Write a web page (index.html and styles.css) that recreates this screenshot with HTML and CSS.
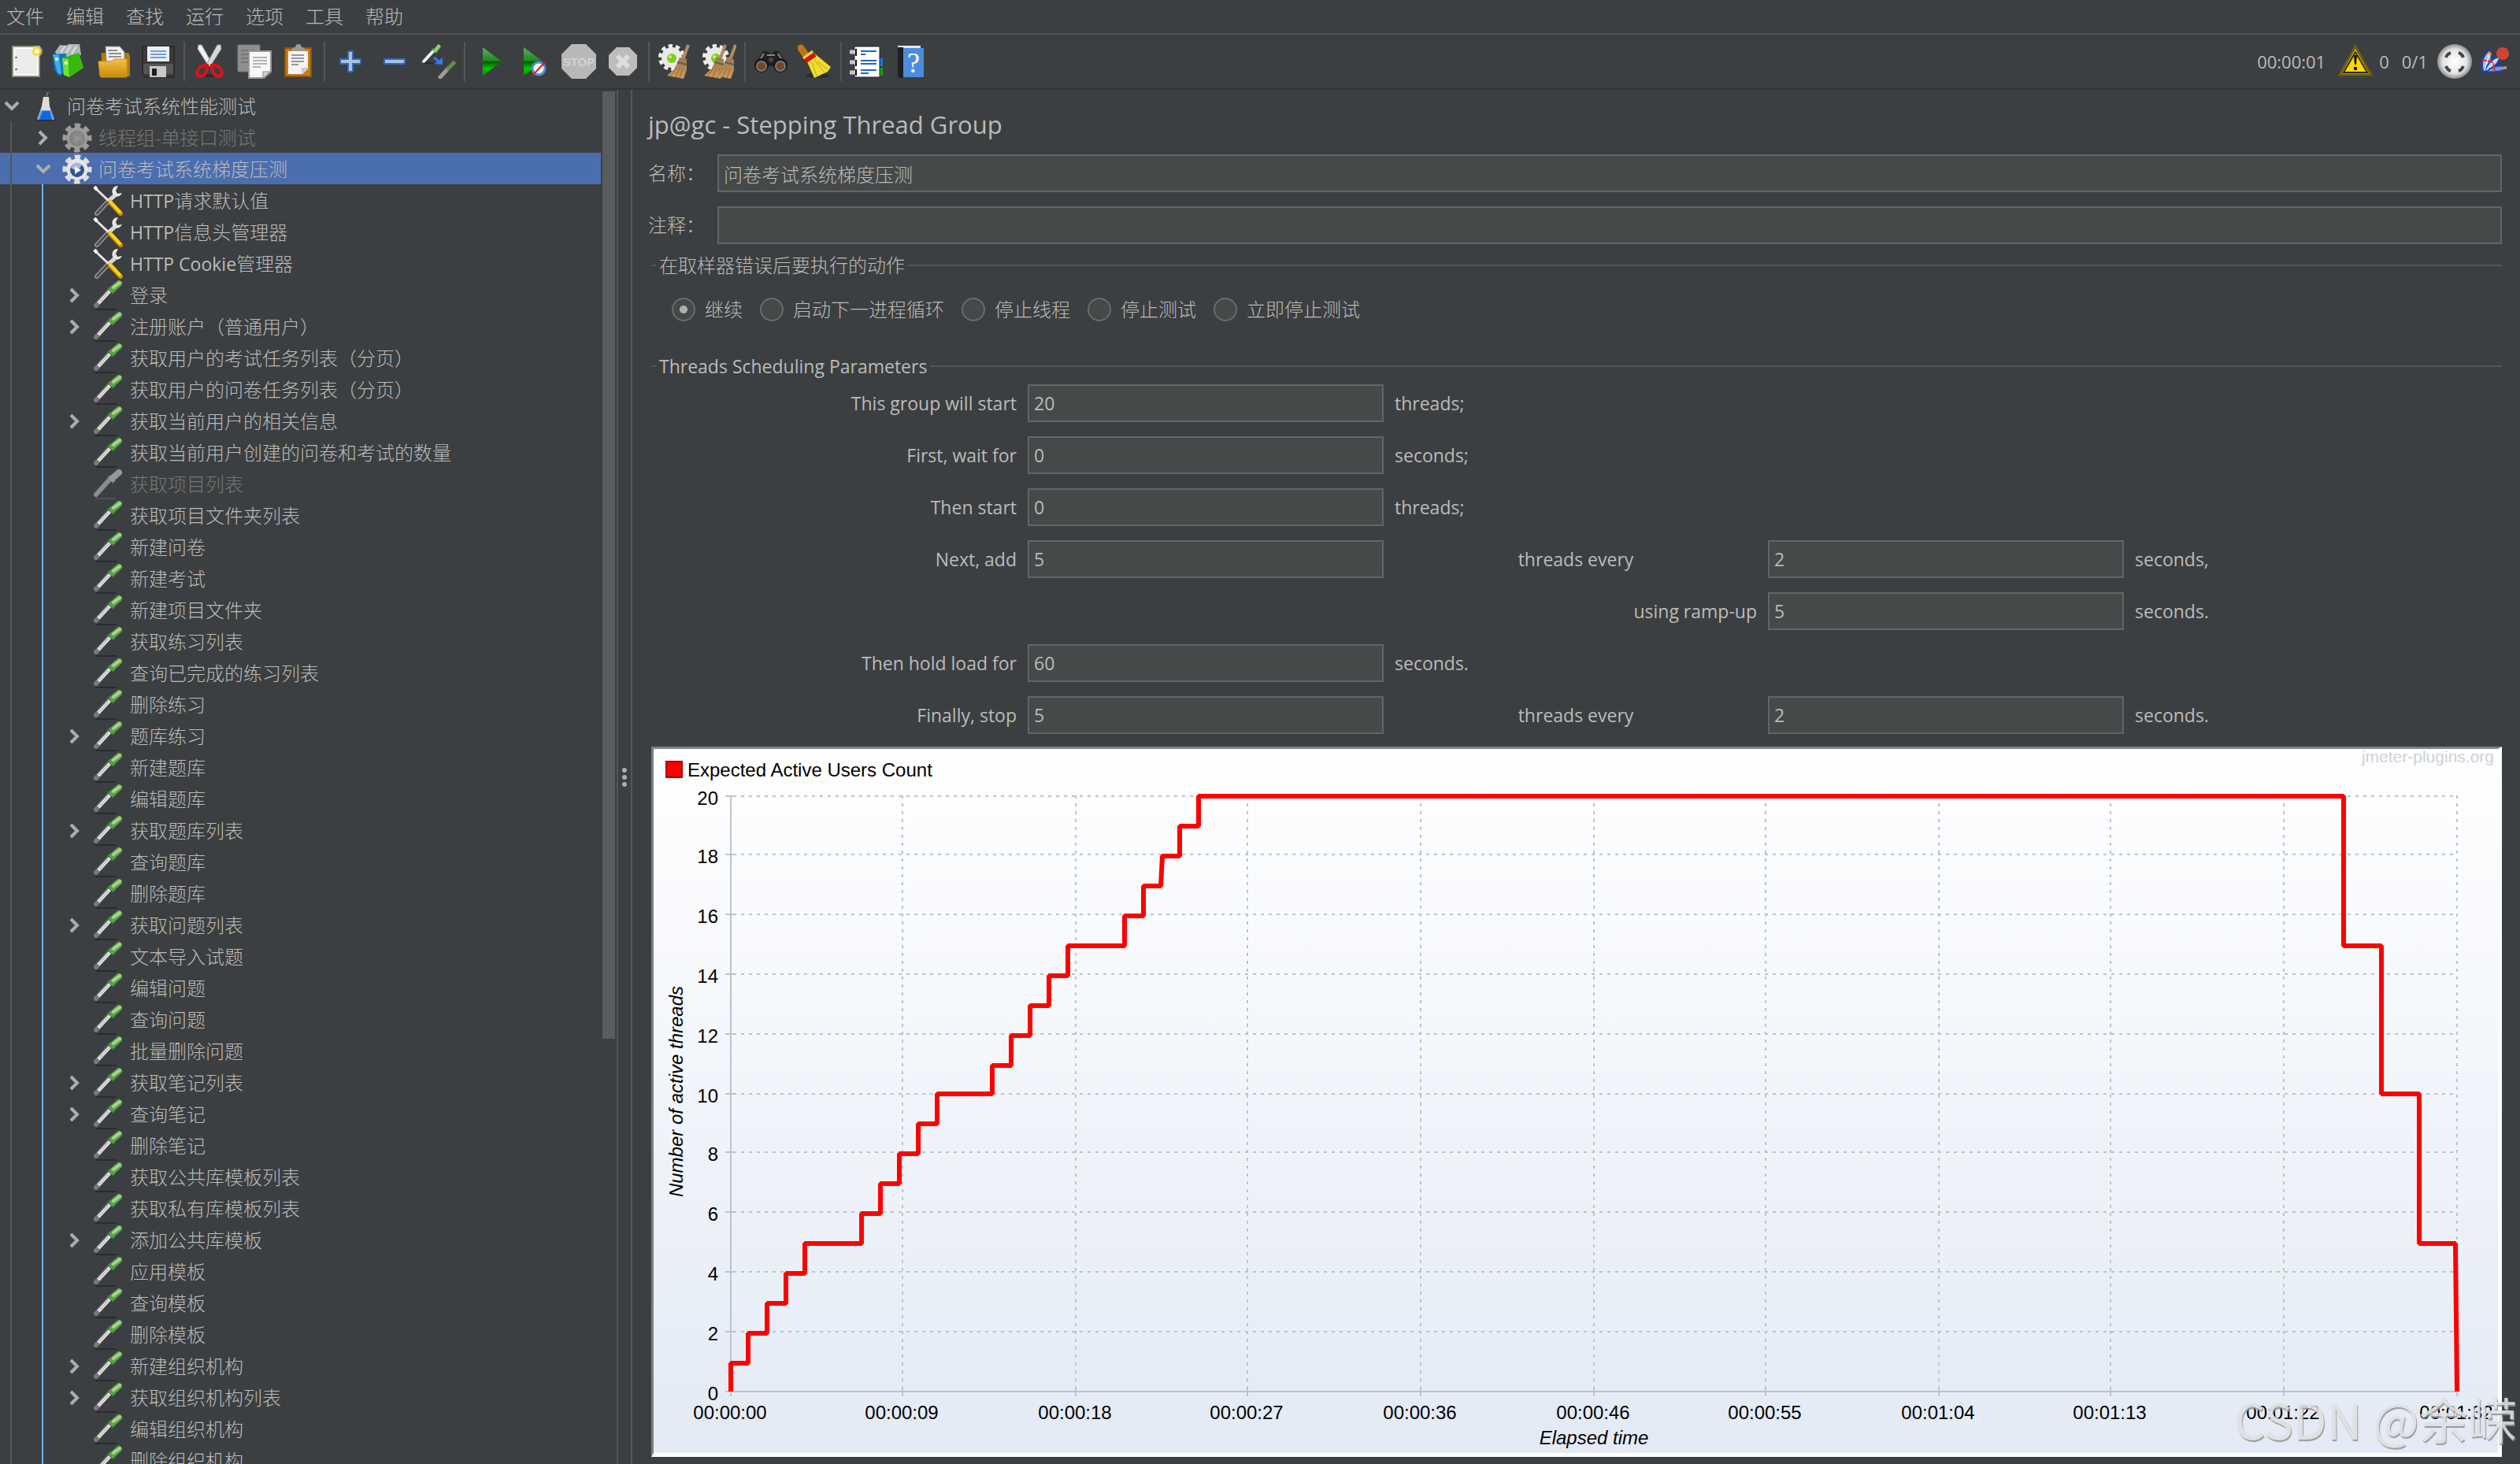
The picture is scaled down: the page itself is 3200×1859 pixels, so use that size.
FILE: index.html
```html
<!DOCTYPE html>
<html lang="zh-CN">
<head>
    <meta charset="UTF-8">
    <meta name="viewport" content="width=device-width, initial-scale=1.0">
    <title>Apache JMeter</title>
    <link rel="stylesheet" href="styles.css">
</head>
<body>
    <!-- Shared icons -->
    <svg class="sprite" aria-hidden="true">
        <defs>
            <linearGradient id="bristle" x1="0" y1="0" x2="0" y2="1">
                <stop offset="0" stop-color="#8f7858"/><stop offset="1" stop-color="#d69a55"/>
            </linearGradient>
            <linearGradient id="play" x1="0" y1="0" x2="0" y2="1">
                <stop offset="0" stop-color="#5fae5f"/><stop offset=".48" stop-color="#1c8a1c"/><stop offset=".5" stop-color="#045504"/><stop offset=".75" stop-color="#00c400"/><stop offset="1" stop-color="#009a00"/>
            </linearGradient>
            <linearGradient id="gold" x1="0" y1="0" x2="0" y2="1">
                <stop offset="0" stop-color="#f3c04b"/><stop offset="1" stop-color="#c98a06"/>
            </linearGradient>
            <radialGradient id="ball">
                <stop offset="0" stop-color="#fff"/><stop offset=".7" stop-color="#e4e4e4"/><stop offset="1" stop-color="#8d8d8d"/>
            </radialGradient>
        </defs>
        <symbol id="open" viewBox="0 0 30 40"><path d="M7 15l8 8 8-8" fill="none" stroke="#adadad" stroke-width="4"/></symbol>
        <symbol id="closed" viewBox="0 0 30 40"><path d="M10 12l8 8-8 8" fill="none" stroke="#adadad" stroke-width="4"/></symbol>
        <symbol id="flask" viewBox="0 0 40 40">
            <path d="M21 7l2-5" stroke="#777" stroke-width="2"/>
            <ellipse cx="20" cy="37" rx="13" ry="2" fill="#2d3032"/>
            <path d="M17 8h7l1 12 6 17H9l6-17z" fill="#dcdcdc"/>
            <path d="M14 25h13l4 12H9z" fill="#6f9fe0"/>
            <path d="M16 26h9l3 11H12z" fill="#0a6be0"/>
        </symbol>
        <symbol id="gear" viewBox="0 0 40 40">
            <circle cx="20" cy="20" r="15" fill="none" stroke="#dedede" stroke-width="7" stroke-dasharray="7 4.780" stroke-dashoffset="3.500"/>
            <circle cx="20" cy="20" r="13.500" fill="#e6e6e6"/>
            <circle cx="20" cy="21" r="9" fill="#33558f"/>
            <path d="M12 18a9 9 0 0 1 14-4l-6 9z" fill="#a9bbdb"/>
            <path d="M17 16l8 5-8 5z" fill="#eef2f8"/>
        </symbol>
        <symbol id="gear-off" viewBox="0 0 40 40">
            <circle cx="20" cy="20" r="15" fill="none" stroke="#9b9b9b" stroke-width="7" stroke-dasharray="7 4.780" stroke-dashoffset="3.500"/>
            <circle cx="20" cy="20" r="13.500" fill="#9b9b9b"/>
            <circle cx="20" cy="21" r="9" fill="#888" stroke="#808080" stroke-width="2"/>
            <path d="M17 16l8 5-8 5z" fill="#969696"/>
        </symbol>
        <symbol id="tools" viewBox="0 0 40 40">
            <path d="M5 36 20 20" stroke="#8c8c8c" stroke-width="6" stroke-linecap="round"/>
            <path d="M5 36 20 20" stroke="#3e4143" stroke-width="2" stroke-linecap="round"/>
            <path d="M20 20l8-7" stroke="#d8d8d8" stroke-width="5"/>
            <path d="M32 1c-6 0-9 5-7 10 3 5 9 5 12-1l-6 1-2-4z" fill="#e6e6e6"/>
            <path d="M2 3 20 20" stroke="#e4e4e4" stroke-width="3"/>
            <path d="M2 2l3 4" stroke="#fff" stroke-width="4"/>
            <path d="M22 22 35 36" stroke="#c98f00" stroke-width="6" stroke-linecap="round"/>
            <path d="M22 21 34 34" stroke="#ffd21c" stroke-width="4" stroke-linecap="round"/>
        </symbol>
        <symbol id="dropper" viewBox="0 0 40 40">
            <path d="M4 38h25" stroke="#292c2e" stroke-width="2" stroke-linecap="round"/>
            <path d="M4 33 22 13" stroke="#77797a" stroke-width="6" stroke-linecap="round"/>
            <path d="M7 30 23 13" stroke="#f1f1f1" stroke-width="4"/>
            <path d="M8 29 20 16" stroke="#8c8c8c" stroke-width="1"/>
            <path d="M20 10l7 7" stroke="#397d39" stroke-width="5"/>
            <path d="M25 12 33 5" stroke="#5da14c" stroke-width="8" stroke-linecap="round"/>
            <path d="M26 10 34 4" stroke="#a3d889" stroke-width="4" stroke-linecap="round"/>
        </symbol>
        <symbol id="dropper-off" viewBox="0 0 40 40">
            <path d="M4 38h25" stroke="#4e5153" stroke-width="2" stroke-linecap="round"/>
            <path d="M4 33 22 13" stroke="#8b8b8b" stroke-width="6" stroke-linecap="round"/>
            <path d="M20 10l7 7" stroke="#858585" stroke-width="5"/>
            <path d="M25 12 33 5" stroke="#989898" stroke-width="8" stroke-linecap="round"/>
        </symbol>
        <symbol id="clean-gear" viewBox="0 0 44 44">
            <circle cx="18" cy="17" r="14" fill="none" stroke="#ededed" stroke-width="6" stroke-dasharray="5 3.790"/>
            <circle cx="18" cy="17" r="13" fill="#e9e9e9"/>
            <circle cx="18" cy="18" r="6" fill="#7dcf1f"/><circle cx="16" cy="16" r="2" fill="#c6f58d"/>
        </symbol>
        <symbol id="straw" viewBox="0 0 44 44">
            <path d="M39 1 32 20" stroke="#b08b5d" stroke-width="4"/>
            <path d="M28 17l9 2 0 14-4 11-21-4 10-9z" fill="url(#bristle)"/>
            <path d="M24 30 17 40M28 30l-5 12M32 31l-4 12" stroke="#94683a" stroke-width="1"/>
            <path d="M25 23l12 3" stroke="#6f5a40" stroke-width="2"/>
        </symbol>
    </svg>

    <!-- Menu -->
    <nav class="menu-bar">
        <button class="menu-item">文件</button>
        <button class="menu-item">编辑</button>
        <button class="menu-item">查找</button>
        <button class="menu-item">运行</button>
        <button class="menu-item">选项</button>
        <button class="menu-item">工具</button>
        <button class="menu-item">帮助</button>
    </nav>

    <!-- Toolbar -->
    <div class="toolbar">
        <button class="tool" aria-label="新建">
            <svg viewBox="0 0 44 44"><path d="M5 3h34v38H5z" fill="#eee" stroke="#8d8d82" stroke-width="2"/><path d="M7 5h30v34H7z" fill="#ececec" stroke="#fff" stroke-width="2"/><path d="M8 17h3M8 32h3" stroke="#777" stroke-width="2"/><circle cx="36" cy="9" r="7" fill="#efe36c" opacity=".6"/><circle cx="36" cy="9" r="4" fill="#fffbd0" stroke="#ecd83a" stroke-width="2"/></svg>
        </button>
        <button class="tool" aria-label="模板">
            <svg viewBox="0 0 44 44"><path d="M3 10 9 1l8 1 3-2h14l2 14-30 4z" fill="#aeb6ba"/><path d="M10 11l6-9M17 11l6-9M24 12l6-9" stroke="#dfe4e6" stroke-width="2"/><path d="M0 13l17-1 1 24-11 4-5-8z" fill="#1279c0"/><path d="M0 13l8 1 3 25-5-3z" fill="#3db1ea"/><circle cx="5" cy="19" r="2" fill="#fff"/><path d="M12 18 33 11l6 19-18 12-7-3z" fill="#2bb500"/><path d="M12 18l8 1 1 23-7-3z" fill="#6fe03a"/><path d="M20 19l13-8 6 19-18 12z" fill="#37b80c"/><circle cx="17" cy="24" r="2" fill="#fff"/></svg>
        </button>
        <button class="tool" aria-label="打开">
            <svg viewBox="0 0 44 44"><path d="M6 11h34l2 4v26H5z" fill="#b57a08"/><path d="M11 3h18l6 7v12H12z" fill="#f2f2f2" stroke="#888" stroke-width="1"/><path d="M14 8h12M15 12h16M15 16h16" stroke="#909090" stroke-width="2"/><path d="M2 22h16l4-3h16v22q0 1-2 1H6q-2 0-2-2z" fill="url(#gold)" stroke="#d99a14" stroke-width="1"/></svg>
        </button>
        <button class="tool" aria-label="保存">
            <svg viewBox="0 0 44 44"><path d="M2 3h40v39H5l-3-4z" fill="#3c3a3c" stroke="#1d1d1d" stroke-width="1"/><path d="M3 25h38v13H3z" fill="#575457"/><path d="M8 3h28v19H8z" fill="#e8f1fa"/><path d="M12 9h20M12 13h20M12 17h20" stroke="#7c9cc4" stroke-width="2"/><path d="M11 28h21v14H11z" fill="#c8c8c8"/><path d="M14 31h6v9h-6z" fill="#1f1f1f"/></svg>
        </button>
        <span class="separator"></span>
        <button class="tool" aria-label="剪切">
            <svg viewBox="0 0 44 44"><ellipse cx="21" cy="40" rx="11" ry="2" fill="#2b2d2f"/><path d="M7 1 11 1 25 26 20 28 6 6z" fill="#f1f1f1" stroke="#999" stroke-width="1"/><path d="M35 1 31 1 17 26 22 28 36 6z" fill="#d9d9d9" stroke="#999" stroke-width="1"/><path d="M18 27q-8-1-11 5c-4 6-1 9 3 9 6-1 8-7 8-14zM24 27q8-1 11 5c4 6 1 9-3 9-6-1-8-7-8-14z" fill="none" stroke="#d8141c" stroke-width="4"/></svg>
        </button>
        <button class="tool" aria-label="复制">
            <svg viewBox="0 0 44 44"><path d="M1 1h28v34H1z" fill="#8d9090" stroke="#777" stroke-width="1"/><path d="M5 8h18M5 13h18M5 18h10M5 23h9" stroke="#74777a" stroke-width="2"/><path d="M15 9h28v26l-9 8H15z" fill="#f7f7f7" stroke="#9a9a90" stroke-width="2"/><path d="M20 17h18M20 21h18M20 25h18M20 29h10" stroke="#b3b3b3" stroke-width="2"/><path d="M33 43v-8h9z" fill="#d4d4d4" stroke="#8c8c8c" stroke-width="1"/></svg>
        </button>
        <button class="tool" aria-label="粘贴">
            <svg viewBox="0 0 44 44"><path d="M5 5h33v36H5z" fill="#c07f24" stroke="#8f5508" stroke-width="2"/><path d="M9 9h25v22l-7 7H9z" fill="#f4f4f4"/><path d="M14 6q0-2 4-2 0-4 4-4t4 4q4 0 4 2v3H14z" fill="#9c9c8d"/><path d="M13 14h16M13 18h16M13 22h16M13 26h9" stroke="#999" stroke-width="2"/><path d="M26 38v-8h8z" fill="#ccc"/></svg>
        </button>
        <span class="separator"></span>
        <button class="tool" aria-label="展开">
            <svg viewBox="0 0 44 44"><path d="M19 9h6v10h10v6H25v10h-6V25H9v-6h10z" fill="#a5c3e4" stroke="#3069b5" stroke-width="2"/></svg>
        </button>
        <button class="tool" aria-label="折叠">
            <svg viewBox="0 0 44 44"><path d="M9 19h26v6H9z" fill="#a5c3e4" stroke="#3069b5" stroke-width="2"/></svg>
        </button>
        <button class="tool" aria-label="切换">
            <svg viewBox="0 0 44 44"><path d="M2 24h13" stroke="#25282a" stroke-width="2"/><path d="M3 22 16 8" stroke="#f0f0f0" stroke-width="4" stroke-linecap="round"/><path d="M14 5l6 6" stroke="#397d39" stroke-width="3"/><path d="M18 8l4-5" stroke="#8ccc70" stroke-width="5" stroke-linecap="round"/><path d="M16 17l7 6" stroke="#2b7fee" stroke-width="3"/><path d="M27 17v9l-10-1z" fill="#2b7fee"/><path d="M24 42 34 31" stroke="#9b9d9c" stroke-width="5" stroke-linecap="round"/><path d="M34 31l7-7" stroke="#618f4c" stroke-width="5" stroke-linecap="round"/></svg>
        </button>
        <span class="separator"></span>
        <button class="tool" aria-label="启动">
            <svg viewBox="0 0 44 44"><path d="M12 4 36 22 12 40z" fill="url(#play)"/></svg>
        </button>
        <button class="tool" aria-label="无间隔启动">
            <svg viewBox="0 0 44 44"><path d="M8 4 32 22 8 40z" fill="url(#play)"/><circle cx="27" cy="31" r="8" fill="#f2f7fc" stroke="#4f8fd0" stroke-width="3"/><path d="M19 40 35 23" stroke="#d82020" stroke-width="2"/></svg>
        </button>
        <button class="tool" aria-label="停止">
            <svg viewBox="0 0 44 44"><path d="M13 0h18l13 13v18L31 44H13L0 31V13z" fill="#b8b8b8"/><text x="22" y="28" text-anchor="middle" class="stop-text">STOP</text></svg>
        </button>
        <button class="tool" aria-label="关闭">
            <svg viewBox="0 0 44 44"><path d="M14 4h16l10 10v16L30 40H14L4 30V14z" fill="#bdbdbd"/><path d="M15 15l14 14M29 15 15 29" stroke="#dedede" stroke-width="6"/></svg>
        </button>
        <span class="separator"></span>
        <button class="tool" aria-label="清除">
            <svg viewBox="0 0 44 44"><use href="#clean-gear"/><use href="#straw"/></svg>
        </button>
        <button class="tool" aria-label="清除全部">
            <svg viewBox="0 0 44 44"><use href="#clean-gear"/><use href="#straw" x="-9"/><use href="#straw" x="4"/></svg>
        </button>
        <span class="separator"></span>
        <button class="tool" aria-label="查找">
            <svg viewBox="0 0 44 44"><path d="M12 9h6l4 4 4-4h6l11 19H1z" fill="#1f2021"/><path d="M13 12 5 25M31 12l8 13M17 14h10" stroke="#898989" stroke-width="2"/><circle cx="10" cy="27" r="9" fill="#17181a"/><circle cx="34" cy="27" r="9" fill="#17181a"/><circle cx="10" cy="28" r="6" fill="#79451f" stroke="#77797b" stroke-width="2"/><circle cx="34" cy="28" r="6" fill="#79451f" stroke="#77797b" stroke-width="2"/><circle cx="22" cy="20" r="3" fill="#46494c"/></svg>
        </button>
        <button class="tool" aria-label="重置查找">
            <svg viewBox="0 0 44 44"><ellipse cx="25" cy="40" rx="15" ry="3" fill="#292c2e"/><path d="M4 5 11 15" stroke="#bf7417" stroke-width="9" stroke-linecap="round"/><path d="M10 18 19 10 42 29 38 35 21 43z" fill="#f1dc2f"/><path d="M18 23l6 17M21 20l13 16M25 22l13 10" stroke="#c3a20b" stroke-width="1"/><path d="M9 22 22 13" stroke="#cb1515" stroke-width="6"/><path d="M7 18 19 9" stroke="#ead23a" stroke-width="3"/></svg>
        </button>
        <span class="separator"></span>
        <button class="tool" aria-label="函数助手">
            <svg viewBox="0 0 44 44"><path d="M36 18h6v10h-6z" fill="#1b72e0"/><path d="M36 30h6v10h-6z" fill="#12a312"/><path d="M6 3h32v39H6z" fill="#fff" stroke="#222" stroke-width="1"/><path d="M8 6v9M8 20v8M8 32v8" stroke="#111" stroke-width="2"/><path d="M0 10h7M0 23h7M0 36h7" stroke="#c9c9c9" stroke-width="5"/><path d="M14 9h20M14 13h6M14 21h20M14 25h20M14 33h20M14 37h10" stroke="#1c64d8" stroke-width="2"/></svg>
        </button>
        <button class="tool" aria-label="帮助">
            <svg viewBox="0 0 44 44"><path d="M5 2h29v6H5z" fill="#e7e7e7"/><path d="M5 4h7v39H7l-2-3z" fill="#1d1f22"/><path d="M12 5h26v37H12z" fill="#4a8de0"/><text x="25" y="36" text-anchor="middle" class="help-text">?</text></svg>
        </button>
        <div class="status">
            <span class="timer">00:00:01</span>
            <button class="status-icon" aria-label="日志"><svg viewBox="0 0 44 44"><path d="M22 3 42 39H2z" fill="#ffd800" stroke="#6b5c12" stroke-width="3"/><path d="M22 10 37 36H7z" fill="#ffd800" stroke="#2e2800" stroke-width="2"/><path d="M20 14h4l-1 12h-2zM20 29h4v4h-4z" fill="#111"/></svg></button>
            <span class="errors">0</span>
            <span class="threads">0/1</span>
            <svg class="status-icon" viewBox="0 0 44 44"><circle cx="22" cy="22" r="22" fill="url(#ball)"/><path d="M11 17q1-4 6-6M27 11q4 1 6 6M11 28q2 5 6 6M27 34q4-1 6-6" fill="none" stroke="#444" stroke-width="4"/></svg>
            <svg class="status-icon feather" viewBox="0 0 44 44"><path d="M4 35Q0 15 13 8q5 10-5 27z" fill="#a8c4ff" stroke="#1746b0" stroke-width="2"/><path d="M6 34Q13 18 25 16q0 10-17 19z" fill="#b9ccff" stroke="#1746b0" stroke-width="2"/><path d="M7 35q16-12 28-5-8 7-28 5z" fill="#8793c8" stroke="#1746b0" stroke-width="2"/><path d="M3 20l9 2M12 20l6 5M17 25l2 9" stroke="#e02b2b" stroke-width="2"/><path d="M6 34 12 12M9 33l13-14" stroke="#fff" stroke-width="1"/><path d="M11 10l3 4M30 30h4" stroke="#ff9b1c" stroke-width="3"/><circle cx="29" cy="12" r="8" fill="#d04438"/></svg>
        </div>
    </div>

    <div class="workspace">
        <!-- Test plan tree -->
        <aside class="sidebar">
            <ul class="tree">
                <li class="row"><svg class="arrow"><use href="#open"/></svg><svg class="icon"><use href="#flask"/></svg>问卷考试系统性能测试</li>
                <li class="row level-1 disabled"><svg class="arrow"><use href="#closed"/></svg><svg class="icon"><use href="#gear-off"/></svg>线程组-单接口测试</li>
                <li class="row level-1 selected"><svg class="arrow"><use href="#open"/></svg><svg class="icon"><use href="#gear"/></svg>问卷考试系统梯度压测</li>
                <li class="row level-2"><span class="arrow"></span><svg class="icon"><use href="#tools"/></svg><span class="latin">HTTP</span>请求默认值</li>
                <li class="row level-2"><span class="arrow"></span><svg class="icon"><use href="#tools"/></svg><span class="latin">HTTP</span>信息头管理器</li>
                <li class="row level-2"><span class="arrow"></span><svg class="icon"><use href="#tools"/></svg><span class="latin">HTTP Cookie</span>管理器</li>
                <li class="row level-2"><svg class="arrow"><use href="#closed"/></svg><svg class="icon"><use href="#dropper"/></svg>登录</li>
                <li class="row level-2"><svg class="arrow"><use href="#closed"/></svg><svg class="icon"><use href="#dropper"/></svg>注册账户（普通用户）</li>
                <li class="row level-2"><span class="arrow"></span><svg class="icon"><use href="#dropper"/></svg>获取用户的考试任务列表（分页）</li>
                <li class="row level-2"><span class="arrow"></span><svg class="icon"><use href="#dropper"/></svg>获取用户的问卷任务列表（分页）</li>
                <li class="row level-2"><svg class="arrow"><use href="#closed"/></svg><svg class="icon"><use href="#dropper"/></svg>获取当前用户的相关信息</li>
                <li class="row level-2"><span class="arrow"></span><svg class="icon"><use href="#dropper"/></svg>获取当前用户创建的问卷和考试的数量</li>
                <li class="row level-2 disabled"><span class="arrow"></span><svg class="icon"><use href="#dropper-off"/></svg>获取项目列表</li>
                <li class="row level-2"><span class="arrow"></span><svg class="icon"><use href="#dropper"/></svg>获取项目文件夹列表</li>
                <li class="row level-2"><span class="arrow"></span><svg class="icon"><use href="#dropper"/></svg>新建问卷</li>
                <li class="row level-2"><span class="arrow"></span><svg class="icon"><use href="#dropper"/></svg>新建考试</li>
                <li class="row level-2"><span class="arrow"></span><svg class="icon"><use href="#dropper"/></svg>新建项目文件夹</li>
                <li class="row level-2"><span class="arrow"></span><svg class="icon"><use href="#dropper"/></svg>获取练习列表</li>
                <li class="row level-2"><span class="arrow"></span><svg class="icon"><use href="#dropper"/></svg>查询已完成的练习列表</li>
                <li class="row level-2"><span class="arrow"></span><svg class="icon"><use href="#dropper"/></svg>删除练习</li>
                <li class="row level-2"><svg class="arrow"><use href="#closed"/></svg><svg class="icon"><use href="#dropper"/></svg>题库练习</li>
                <li class="row level-2"><span class="arrow"></span><svg class="icon"><use href="#dropper"/></svg>新建题库</li>
                <li class="row level-2"><span class="arrow"></span><svg class="icon"><use href="#dropper"/></svg>编辑题库</li>
                <li class="row level-2"><svg class="arrow"><use href="#closed"/></svg><svg class="icon"><use href="#dropper"/></svg>获取题库列表</li>
                <li class="row level-2"><span class="arrow"></span><svg class="icon"><use href="#dropper"/></svg>查询题库</li>
                <li class="row level-2"><span class="arrow"></span><svg class="icon"><use href="#dropper"/></svg>删除题库</li>
                <li class="row level-2"><svg class="arrow"><use href="#closed"/></svg><svg class="icon"><use href="#dropper"/></svg>获取问题列表</li>
                <li class="row level-2"><span class="arrow"></span><svg class="icon"><use href="#dropper"/></svg>文本导入试题</li>
                <li class="row level-2"><span class="arrow"></span><svg class="icon"><use href="#dropper"/></svg>编辑问题</li>
                <li class="row level-2"><span class="arrow"></span><svg class="icon"><use href="#dropper"/></svg>查询问题</li>
                <li class="row level-2"><span class="arrow"></span><svg class="icon"><use href="#dropper"/></svg>批量删除问题</li>
                <li class="row level-2"><svg class="arrow"><use href="#closed"/></svg><svg class="icon"><use href="#dropper"/></svg>获取笔记列表</li>
                <li class="row level-2"><svg class="arrow"><use href="#closed"/></svg><svg class="icon"><use href="#dropper"/></svg>查询笔记</li>
                <li class="row level-2"><span class="arrow"></span><svg class="icon"><use href="#dropper"/></svg>删除笔记</li>
                <li class="row level-2"><span class="arrow"></span><svg class="icon"><use href="#dropper"/></svg>获取公共库模板列表</li>
                <li class="row level-2"><span class="arrow"></span><svg class="icon"><use href="#dropper"/></svg>获取私有库模板列表</li>
                <li class="row level-2"><svg class="arrow"><use href="#closed"/></svg><svg class="icon"><use href="#dropper"/></svg>添加公共库模板</li>
                <li class="row level-2"><span class="arrow"></span><svg class="icon"><use href="#dropper"/></svg>应用模板</li>
                <li class="row level-2"><span class="arrow"></span><svg class="icon"><use href="#dropper"/></svg>查询模板</li>
                <li class="row level-2"><span class="arrow"></span><svg class="icon"><use href="#dropper"/></svg>删除模板</li>
                <li class="row level-2"><svg class="arrow"><use href="#closed"/></svg><svg class="icon"><use href="#dropper"/></svg>新建组织机构</li>
                <li class="row level-2"><svg class="arrow"><use href="#closed"/></svg><svg class="icon"><use href="#dropper"/></svg>获取组织机构列表</li>
                <li class="row level-2"><span class="arrow"></span><svg class="icon"><use href="#dropper"/></svg>编辑组织机构</li>
                <li class="row level-2"><span class="arrow"></span><svg class="icon"><use href="#dropper"/></svg>删除组织机构</li>
            </ul>
            <div class="scrollbar"><div class="thumb"></div></div>
        </aside>
        <div class="splitter"><i></i><i></i><i></i></div>

        <!-- Thread group settings -->
        <main class="panel">
            <h1 class="title">jp@gc - Stepping Thread Group</h1>
            <div class="field">
                <label for="name">名称：</label>
                <input type="text" id="name" value="问卷考试系统梯度压测">
            </div>
            <div class="field">
                <label for="comment">注释：</label>
                <input type="text" id="comment">
            </div>

            <fieldset class="group actions">
                <legend>在取样器错误后要执行的动作</legend>
                <div class="radios">
                    <label><input type="radio" name="on-error" checked>继续</label>
                    <label><input type="radio" name="on-error">启动下一进程循环</label>
                    <label><input type="radio" name="on-error">停止线程</label>
                    <label><input type="radio" name="on-error">停止测试</label>
                    <label><input type="radio" name="on-error">立即停止测试</label>
                </div>
            </fieldset>

            <fieldset class="group latin">
                <legend>Threads Scheduling Parameters</legend>
                <div class="params">
                    <label class="right" for="start">This group will start</label>
                    <input type="text" id="start" value="20">
                    <span class="unit">threads;</span>

                    <label class="right" for="wait">First, wait for</label>
                    <input type="text" id="wait" value="0">
                    <span class="unit">seconds;</span>

                    <label class="right" for="then">Then start</label>
                    <input type="text" id="then" value="0">
                    <span class="unit">threads;</span>

                    <label class="right" for="add">Next, add</label>
                    <input type="text" id="add" value="5">
                    <label class="center" for="add-every">threads every</label>
                    <input type="text" id="add-every" value="2">
                    <span>seconds,</span>

                    <label class="right ramp" for="ramp">using ramp-up</label>
                    <input type="text" id="ramp" value="5">
                    <span>seconds.</span>

                    <label class="right" for="hold">Then hold load for</label>
                    <input type="text" id="hold" value="60">
                    <span class="unit">seconds.</span>

                    <label class="right" for="stop">Finally, stop</label>
                    <input type="text" id="stop" value="5">
                    <label class="center" for="stop-every">threads every</label>
                    <input type="text" id="stop-every" value="2">
                    <span>seconds.</span>
                </div>
            </fieldset>

            <!-- Expected users chart -->
            <div class="chart">
                <svg viewBox="3 3 2342 894">
                    <rect x="19" y="19" width="20" height="20" fill="#f00" stroke="#b20000" stroke-width="2"/>
                    <text x="46" y="38">Expected Active Users Count</text>
                    <text x="2340" y="20" text-anchor="end" class="credit">jmeter-plugins.org</text>

                    <path class="grid" d="M104 63H2293M104 137H2293M104 213H2293M104 289H2293M104 365H2293M104 441H2293M104 515H2293M104 591H2293M104 667H2293M104 743H2293"/>
                    <path class="grid" d="M319 62V819M539 62V819M757 62V819M977 62V819M1197 62V819M1415 62V819M1635 62V819M1853 62V819M2073 62V819M2293 62V819"/>
                    <path class="axis" d="M101 62V825M94 819H2293"/>
                    <path class="axis" d="M94 63h14M94 137h14M94 213h14M94 289h14M94 365h14M94 441h14M94 515h14M94 591h14M94 667h14M94 743h14"/>
                    <path class="axis" d="M319 812v13M539 812v13M757 812v13M977 812v13M1197 812v13M1415 812v13M1635 812v13M1853 812v13M2073 812v13M2293 812v13"/>

                    <g text-anchor="end">
                        <text x="85" y="74">20</text>
                        <text x="85" y="148">18</text>
                        <text x="85" y="224">16</text>
                        <text x="85" y="300">14</text>
                        <text x="85" y="376">12</text>
                        <text x="85" y="452">10</text>
                        <text x="85" y="526">8</text>
                        <text x="85" y="602">6</text>
                        <text x="85" y="678">4</text>
                        <text x="85" y="754">2</text>
                        <text x="85" y="830">0</text>
                    </g>
                    <g text-anchor="middle">
                        <text x="100" y="854">00:00:00</text>
                        <text x="318" y="854">00:00:09</text>
                        <text x="538" y="854">00:00:18</text>
                        <text x="756" y="854">00:00:27</text>
                        <text x="976" y="854">00:00:36</text>
                        <text x="1196" y="854">00:00:46</text>
                        <text x="1414" y="854">00:00:55</text>
                        <text x="1634" y="854">00:01:04</text>
                        <text x="1852" y="854">00:01:13</text>
                        <text x="2072" y="854">00:01:22</text>
                        <text x="2292" y="854">00:01:32</text>
                        <text x="1197" y="886" class="axis-title">Elapsed time</text>
                        <text transform="translate(40 438) rotate(-90)" class="axis-title">Number of active threads</text>
                    </g>

                    <path class="series" d="M101 819V783H123V745H147V707H171V669H195V631H267V593H291V555H315V517H339V479H363V441H433V405H457V367H481V329H505V291H529V253H601V215H625V177H647L649 139H671V101H695V63H2149V253H2197V441H2245V631H2291L2293 819"/>
                </svg>
            </div>
        </main>
    </div>
    <div class="watermark">CSDN @余嵘</div>
</body>
</html>
```

FILE: styles.css
```css
* {
    margin: 0;
    padding: 0;
    box-sizing: border-box;
}

body {
    height: 100vh;
    display: flex;
    flex-direction: column;
    overflow: hidden;
    position: relative;
    background-color: #3c3f41;
    color: #bbbbbb;
    font-family: "Open Sans", "Noto Sans CJK SC", sans-serif;
    font-size: 24px;
    font-weight: 300;
    line-height: 32px;
}

button, input {
    font: inherit;
    color: inherit;
    border: none;
    background: none;
}

.sprite {
    position: absolute;
    width: 0;
    height: 0;
}

/* Text set in the narrower interface size */
.latin {
    font-size: 23px;
    font-weight: 400;
}

/* Menu */
.menu-bar {
    display: flex;
    gap: 28px;
    height: 44px;
    flex: none;
    padding-left: 8px;
    border-bottom: 2px solid #555555;
}

/* Toolbar */
.toolbar {
    display: flex;
    align-items: center;
    height: 70px;
    flex: none;
    padding-left: 5px;
    border-bottom: 2px solid #323537;
}

.tool {
    width: 56px;
    height: 56px;
    padding: 6px;
}

.tool svg {
    display: block;
    width: 44px;
    height: 44px;
}

.separator {
    width: 2px;
    height: 50px;
    margin: 0 4px;
    background-color: #555555;
}

.stop-text {
    font: bold 15px "Liberation Sans", sans-serif;
    fill: #d2d2d2;
}

.help-text {
    font: 36px "Liberation Serif", serif;
    fill: #ffffff;
}

.status {
    display: flex;
    align-items: center;
    margin-left: auto;
    padding-right: 7px;
    font-size: 22px;
    font-weight: 400;
}

.status-icon {
    display: block;
    width: 44px;
    height: 44px;
}

.timer {
    margin-right: 16px;
}

.errors {
    margin: 0 16px 0 8px;
}

.threads {
    margin-right: 12px;
}

.feather {
    margin-left: 10px;
}

/* Main area */
.workspace {
    display: flex;
    flex: 1;
    min-height: 0;
}

.sidebar {
    display: flex;
    width: 785px;
    flex: none;
    border-right: 2px solid #555555;
    overflow: hidden;
}

/* Tree */
.tree {
    flex: 1;
    list-style: none;
}

.row {
    display: flex;
    align-items: center;
    height: 40px;
    padding-top: 2px;
    white-space: nowrap;
    background-repeat: no-repeat;
}

.level-1 {
    padding-left: 40px;
    background-image: linear-gradient(#555555, #555555);
    background-position: 13px 0;
    background-size: 2px 100%;
}

.level-2 {
    padding-left: 80px;
    background-image: linear-gradient(#555555, #555555), linear-gradient(#6cb2ff, #6cb2ff);
    background-position: 13px 0, 53px 0;
    background-size: 2px 100%;
}

.selected {
    background-color: #4b6eaf;
}

.disabled {
    color: #777777;
}

.arrow {
    width: 30px;
    height: 40px;
    margin-right: 8px;
    flex: none;
}

.icon {
    width: 40px;
    height: 40px;
    margin-right: 7px;
    flex: none;
}

.scrollbar {
    width: 20px;
    padding: 2px 2px 0 2px;
}

.thumb {
    height: 69%;
    background-color: #595b5d;
}

.splitter {
    display: flex;
    flex-direction: column;
    align-items: center;
    justify-content: center;
    gap: 3px;
    width: 18px;
    flex: none;
    border-right: 2px solid #555555;
}

.splitter i {
    width: 6px;
    height: 6px;
    border-radius: 50%;
    background-color: #adadad;
}

/* Settings panel */
.panel {
    flex: 1;
    min-width: 0;
    padding: 22px 23px 0 20px;
}

.title {
    margin-bottom: 16px;
    font-size: 31px;
    font-weight: 400;
    line-height: 44px;
}

.field {
    display: flex;
    align-items: center;
    margin-bottom: 18px;
}

.field label {
    width: 88px;
    flex: none;
}

input[type="text"] {
    width: 100%;
    height: 48px;
    padding: 0 6px;
    border: 2px solid #646464;
    background-color: #45494a;
}

.group {
    margin: -7px 0 0 4px;
    border: none;
    border-top: 2px solid #555555;
}

.group legend {
    margin-left: 6px;
    padding: 0 4px;
}

.actions {
    padding-bottom: 48px;
}

.radios {
    display: flex;
    gap: 22px;
    padding: 25px 0 0 26px;
}

.radios label {
    display: flex;
    align-items: center;
    gap: 12px;
    height: 30px;
}

.radios input {
    appearance: none;
    width: 30px;
    height: 30px;
    border: 2px solid #6b6b6b;
    border-radius: 50%;
    background-color: #45494a;
}

.radios input:checked {
    background-image: radial-gradient(circle, #adadad 5px, transparent 5px);
}

.params {
    display: grid;
    grid-template-columns: 460fr 452fr 460fr 452fr 460fr;
    gap: 18px 14px;
    align-items: center;
    padding: 7px 6px 0 4px;
}

.right {
    text-align: right;
}

.center {
    text-align: center;
}

.ramp {
    grid-column: 3;
}

.unit {
    grid-column: 3 / -1;
}

/* Chart */
.chart {
    margin: 16px 0 0 4px;
    border: 3px solid #808080;
    border-width: 3px 5px 5px 3px;
    border-right-color: #ffffff;
    border-bottom-color: #ffffff;
    background: linear-gradient(#ffffff, #e3eaf5);
}

.chart svg {
    display: block;
    width: 100%;
}

.chart text {
    font-family: "Liberation Sans", Arial, sans-serif;
    font-size: 24px;
    font-weight: 400;
    fill: #000000;
}

.chart .axis-title {
    font-style: italic;
}

.chart .credit {
    font-size: 21px;
    fill: #ccd0d9;
}

.axis, .grid {
    fill: none;
    stroke: #bcc3ce;
    stroke-width: 2;
}

.grid {
    stroke-dasharray: 4 6;
}

.series {
    fill: none;
    stroke: #ff0000;
    stroke-width: 6;
    stroke-linejoin: bevel;
}

.watermark {
    position: absolute;
    right: 4px;
    bottom: 28px;
    font-family: "Noto Sans CJK SC", sans-serif;
    font-size: 62px;
    line-height: 60px;
    font-weight: 400;
    color: #dfe0e1;
    text-shadow: 1px 2px 1px #8f9296;
    opacity: 0.9;
}
```
